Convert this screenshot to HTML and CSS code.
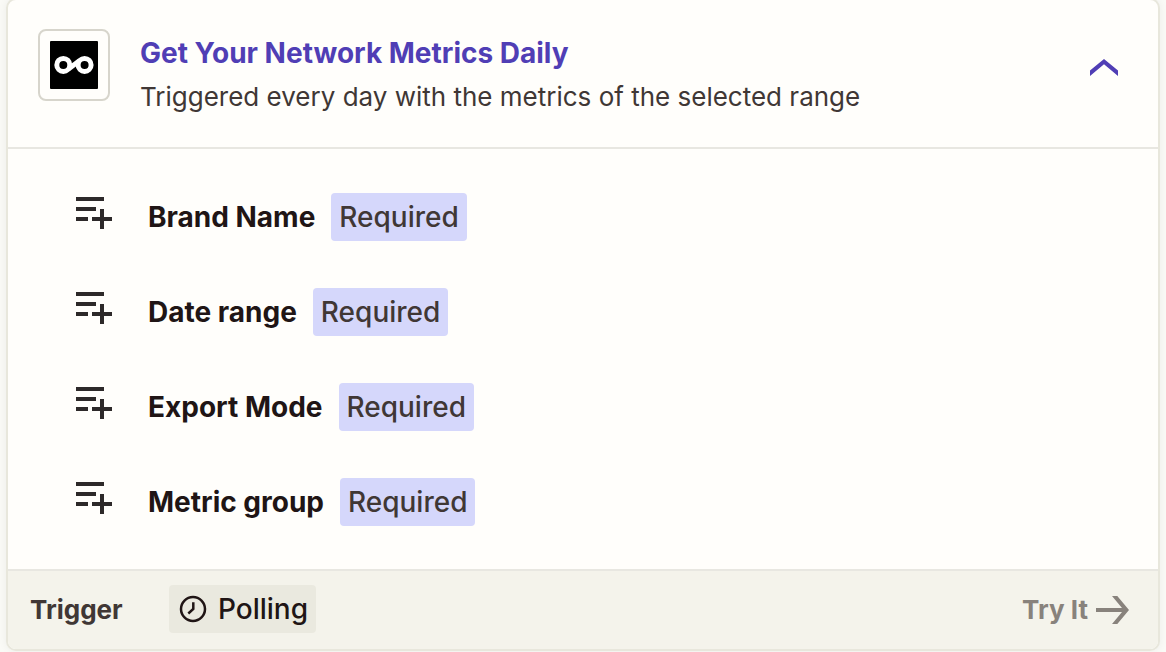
FILE: index.html
```
<!DOCTYPE html>
<html lang="en">
<head>
    <meta charset="UTF-8">
    <meta name="viewport" content="width=device-width, initial-scale=1.0">
    <title>Get Your Network Metrics Daily</title>
    <link rel="stylesheet" href="styles.css">
</head>
<body>
    <svg class="sprite" width="0" height="0">
        <symbol id="icon-field" viewBox="0 0 36 32">
            <path d="M0 0h28v4H0zM0 10h20v4H0zM0 20h12v4H0zM24 12h4v8h8v4h-8v8h-4v-8h-8v-4h8z"/>
        </symbol>
    </svg>

    <div class="card">
        <div class="card-header">
            <div class="app-icon">
                <svg width="48" height="48" viewBox="0 0 48 48">
                    <rect width="48" height="48" rx="1" fill="#000"/>
                    <circle cx="13.300" cy="23.900" r="6.500" fill="none" stroke="#fff" stroke-width="5"/>
                    <circle cx="34.600" cy="23.900" r="6.500" fill="none" stroke="#fff" stroke-width="5"/>
                    <path d="M18.500 28L29.400 19.800" stroke="#fff" stroke-width="5"/>
                </svg>
            </div>
            <div class="heading">
                <h2 class="title">Get Your Network Metrics Daily</h2>
                <p class="description">Triggered every day with the metrics of the selected range</p>
            </div>
            <svg class="chevron" width="28" height="17" viewBox="0 0 28 17">
                <path d="M0 11.500L14 0l14 11.500V17L14 5.300 0 17z"/>
            </svg>
        </div>

        <ul class="fields">
            <li class="field">
                <svg class="field-icon"><use href="#icon-field"/></svg>
                <span class="field-name">Brand Name</span>
                <span class="tag">Required</span>
            </li>
            <li class="field">
                <svg class="field-icon"><use href="#icon-field"/></svg>
                <span class="field-name">Date range</span>
                <span class="tag">Required</span>
            </li>
            <li class="field">
                <svg class="field-icon"><use href="#icon-field"/></svg>
                <span class="field-name">Export Mode</span>
                <span class="tag">Required</span>
            </li>
            <li class="field">
                <svg class="field-icon"><use href="#icon-field"/></svg>
                <span class="field-name">Metric group</span>
                <span class="tag">Required</span>
            </li>
        </ul>

        <div class="card-footer">
            <span class="kind">Trigger</span>
            <span class="polling">
                <svg width="28" height="28" viewBox="0 0 28 28" fill="none" stroke="#201515" stroke-width="2.500">
                    <circle cx="14" cy="14" r="12"/>
                    <path d="M14.300 7.200V14l-5 4.500"/>
                </svg>
                <span class="polling-text">Polling</span>
            </span>
            <a class="try-it">
                <span class="try-it-text">Try It</span>
                <svg width="33" height="28" viewBox="0 0 33 28">
                    <path d="M0 12h26L16 0h5.300L33 14 21.300 28H16l10-12H0z"/>
                </svg>
            </a>
        </div>
    </div>
</body>
</html>
```
FILE: styles.css
```
* {
    box-sizing: border-box;
}
body {
    margin: 0;
    height: 652px;
    overflow: hidden;
    background-color: #fafaf6;
    font-family: Inter, "Liberation Sans", sans-serif;
    font-size: 26px;
    color: #403735;
}
.sprite {
    display: block;
}
.card {
    width: 1154px;
    height: 653px;
    margin: -2px 0 0 6px;
    border: 2px solid #e8e7dc;
    border-radius: 10px;
    background-color: #fffefb;
    box-shadow: 0 0 8px rgba(0, 0, 0, 0.06);
    overflow: hidden;
}
.card-header {
    display: flex;
    height: 149px;
    padding: 29px 40px 0 30px;
    border-bottom: 2px solid #e8e7e1;
}
.app-icon {
    display: flex;
    align-items: center;
    justify-content: center;
    width: 72px;
    height: 72px;
    border: 2px solid #d7d5cc;
    border-radius: 8px;
}
.heading {
    margin-left: 30px;
    white-space: nowrap;
}
.title {
    margin: 2px 0 0;
    font-size: 28px;
    font-weight: 700;
    line-height: 44px;
    color: #503eb5;
}
.description {
    margin: 0;
    line-height: 44px;
}
.chevron {
    margin: 30px 0 0 auto;
    fill: #503eb5;
}
.fields {
    display: flex;
    flex-direction: column;
    gap: 47px;
    height: 420px;
    margin: 0;
    padding: 44px 0 0 68px;
    list-style: none;
}
.field {
    display: flex;
    align-items: flex-start;
    height: 48px;
    line-height: 48px;
    font-size: 28px;
}
.field-icon {
    width: 36px;
    height: 32px;
    margin-top: 4px;
    fill: #2d2929;
}
.field-name {
    margin-left: 36px;
    font-weight: 700;
    color: #201515;
}
.tag {
    margin-left: 16px;
    padding: 0 8px;
    border-radius: 4px;
    background-color: #d5d7fb;
    font-weight: 500;
}
.card-footer {
    display: flex;
    align-items: center;
    height: 80px;
    padding: 0 29px 1px 22px;
    border-top: 2px solid #e8e7e1;
    background-color: #f4f3eb;
}
.kind {
    width: 139px;
    font-weight: 700;
}
.polling {
    display: flex;
    align-items: center;
    height: 48px;
    margin-bottom: 2px;
    padding: 0 8px 0 10px;
    border-radius: 4px;
    background-color: #eae9df;
    font-size: 28px;
    font-weight: 500;
    color: #201515;
}
.polling-text {
    margin-left: 11px;
}
.try-it {
    display: flex;
    align-items: center;
    margin-left: auto;
    font-weight: 700;
    color: #88827c;
    fill: #88827c;
}
.try-it-text {
    margin-right: 8px;
}
```
